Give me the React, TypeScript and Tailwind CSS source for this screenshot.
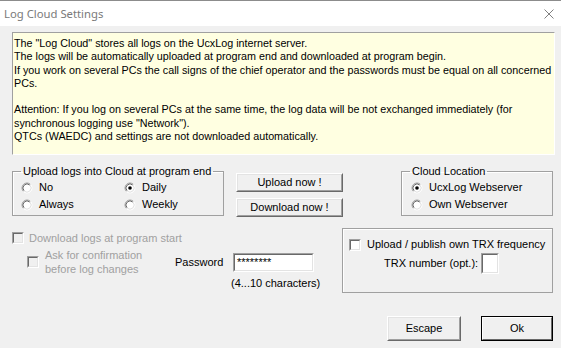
import type { ReactNode } from "react";

const ui = "font-['Liberation_Sans',Arial,sans-serif] text-[11px] leading-[13px]";

function Radio({ checked, label }: { checked?: boolean; label: string }) {
  return (
    <div className="flex h-[17px] items-center gap-[6px]">
      <svg width="12" height="12" viewBox="0 0 12 12" className="shrink-0">
        <circle cx="6" cy="6" r="4" fill="#fff" />
        <path d="M2.46 9.54 A5 5 0 0 1 9.54 2.46" stroke="#a0a0a0" fill="none" />
        <path d="M3.17 8.83 A4 4 0 0 1 8.83 3.17" stroke="#696969" fill="none" />
        <path d="M9.54 2.46 A5 5 0 0 1 2.46 9.54" stroke="#fff" fill="none" />
        <path d="M8.83 3.17 A4 4 0 0 1 3.17 8.83" stroke="#e3e3e3" fill="none" />
        {checked ? <circle cx="6" cy="6" r="1.8" fill="#000" /> : null}
      </svg>
      <span>{label}</span>
    </div>
  );
}

function CheckBox({ disabled }: { disabled?: boolean }) {
  return (
    <span className="block h-[12px] w-[12px] shrink-0 border border-t-[#a0a0a0] border-l-[#a0a0a0] border-b-white border-r-white">
      <span
        className={
          "block h-full w-full border border-t-[#696969] border-l-[#696969] border-b-[#e3e3e3] border-r-[#e3e3e3] " +
          (disabled ? "bg-[#f0f0f0]" : "bg-white")
        }
      />
    </span>
  );
}

function Button({ children, isDefault, className }: { children: ReactNode; isDefault?: boolean; className: string }) {
  return (
    <div
      className={
        "border " +
        (isDefault
          ? "border-[#000]"
          : "border-t-white border-l-white border-b-[#696969] border-r-[#696969]") +
        " " +
        className
      }
    >
      <div
        className={
          "flex h-full w-full items-center justify-center border bg-[#f0f0f0] " +
          (isDefault
            ? "border-t-white border-l-white border-b-[#696969] border-r-[#696969]"
            : "border-t-[#e3e3e3] border-l-[#e3e3e3] border-b-[#a0a0a0] border-r-[#a0a0a0]")
        }
      >
        {children}
      </div>
    </div>
  );
}

function Sunken({ className, children }: { className: string; children?: ReactNode }) {
  return (
    <div className={"border border-t-[#a0a0a0] border-l-[#a0a0a0] border-b-white border-r-white " + className}>
      <div className="h-full w-full border border-t-[#696969] border-l-[#696969] border-b-[#e3e3e3] border-r-[#e3e3e3] bg-white">
        {children}
      </div>
    </div>
  );
}

export default function App() {
  return (
    <div className={"h-[348px] w-[561px] overflow-hidden bg-[#f0f0f0] text-black " + ui}>
      <div className="flex h-[26px] items-center justify-between border-t border-[#8c8c8c] bg-white pl-[4px] pr-[7px]">
        <span className="font-['Noto_Sans',sans-serif] text-[11.3px] text-[#7a7a7a]">Log Cloud Settings</span>
        <svg width="10" height="10" viewBox="0 0 10 10" className="mt-[1px]">
          <path d="M0.5 0.5 L9.5 9.5 M9.5 0.5 L0.5 9.5" stroke="#808080" strokeWidth="1" />
        </svg>
      </div>

      <div className="pl-[12px]">
        <div className="mt-[6px] h-[123px] w-[543px] overflow-hidden whitespace-nowrap border border-t-[#a0a0a0] border-l-[#a0a0a0] border-b-white border-r-white bg-[#ffffe1] pl-[1px] pt-[4px] text-[10.75px] leading-[13.25px]">
          The "Log Cloud" stores all logs on the UcxLog internet server.
          <br />
          The logs will be automatically uploaded at program end and downloaded at program begin.
          <br />
          If you work on several PCs the call signs of the chief operator and the passwords must be equal on all concerned
          <br />
          PCs.
          <br />
          <br />
          Attention: If you log on several PCs at the same time, the log data will be not exchanged immediately (for
          <br />
          synchronous logging use "Network").
          <br />
          QTCs (WAEDC) and settings are not downloaded automatically.
        </div>

        <div className="mt-[10px] flex items-start">
          <fieldset className="h-[51px] w-[212px] border border-[#a0a0a0] shadow-[inset_1px_1px_0_#fff]">
            <legend className="ml-[8px] px-[2px]">Upload logs into Cloud at program end</legend>
            <div className="grid grid-cols-[103px_1fr] pl-[8px] pt-[1px]">
              <Radio label="No" />
              <Radio label="Daily" checked />
              <Radio label="Always" />
              <Radio label="Weekly" />
            </div>
          </fieldset>

          <div className="ml-[12px] mt-[8px] flex w-[107px] flex-col gap-[6px]">
            <Button className="h-[19px] w-[107px]">Upload now !</Button>
            <Button className="h-[19px] w-[107px]">Download now !</Button>
          </div>

          <fieldset className="ml-[58px] h-[51px] w-[152px] border border-[#a0a0a0] shadow-[inset_1px_1px_0_#fff]">
            <legend className="ml-[8px] px-[2px]">Cloud Location</legend>
            <div className="pl-[9px] pt-[1px]">
              <Radio label="UcxLog Webserver" checked />
              <Radio label="Own Webserver" />
            </div>
          </fieldset>
        </div>

        <div className="mt-[11px] flex items-start">
          <div className="w-[330px]">
            <div className="mt-[3px] flex h-[14px] items-center gap-[5px] text-[#a0a0a0]">
              <CheckBox disabled />
              <span>Download logs at program start</span>
            </div>
            <div className="mt-[3px] flex items-start">
              <div className="ml-[15px] flex h-[28px] w-[148px] items-center gap-[6px] text-[#a0a0a0]">
                <CheckBox disabled />
                <span className="leading-[14px]">
                  Ask for confirmation
                  <br />
                  before log changes
                </span>
              </div>
              <div className="flex flex-col">
                <div className="mt-[5px] flex items-center">
                  <span className="w-[58px]">Password</span>
                  <Sunken className="h-[19px] w-[81px]">
                    <div className="pl-[2px] pt-[1px] leading-[12px]">********</div>
                  </Sunken>
                </div>
                <div className="mt-[5px] pl-[56px]">(4...10 characters)</div>
              </div>
            </div>
          </div>

          <div className="h-[65px] w-[211px] border border-[#a0a0a0] pl-[6px] pt-[9px] shadow-[inset_1px_1px_0_#fff]">
            <div className="flex h-[13px] items-center gap-[6px]">
              <CheckBox />
              <span>Upload / publish own TRX frequency</span>
            </div>
            <div className="ml-[35px] mt-[2px] flex h-[21px] items-center gap-[3px]">
              <span>TRX number (opt.):</span>
              <Sunken className="h-[21px] w-[18px]" />
            </div>
          </div>
        </div>

        <div className="mt-[23px] flex">
          <Button className="ml-[375px] h-[25px] w-[74px]">Escape</Button>
          <Button className="ml-[20px] h-[25px] w-[72px]" isDefault>
            Ok
          </Button>
        </div>
      </div>
    </div>
  );
}
